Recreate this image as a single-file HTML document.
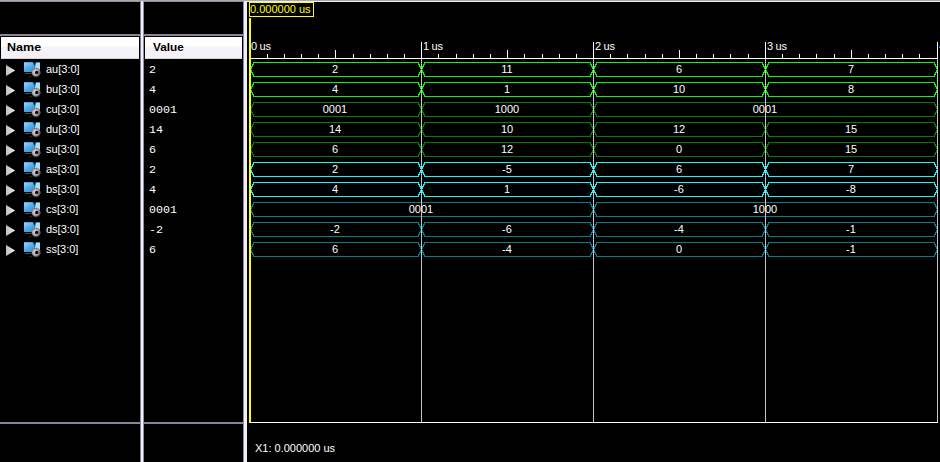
<!DOCTYPE html>
<html><head><meta charset="utf-8"><title>Waveform</title>
<style>
html,body{margin:0;padding:0;background:#000;}
body{width:940px;height:462px;position:relative;overflow:hidden;font-family:"Liberation Sans",sans-serif;font-size:11px;color:#fff;}
.abs{position:absolute;}
.hdr{position:absolute;top:37px;height:21px;background:linear-gradient(#fff 0,#fff 9px,#f5f3f8 10px,#f3f1f6 21px);border-bottom:1px solid #d3d8d3;color:#000;font-weight:bold;font-size:11px;line-height:21px;}
.nm{position:absolute;left:46px;font-size:11px;line-height:14px;white-space:nowrap;color:#fff;}
.val{position:absolute;left:149.4px;transform:scaleX(1.06);transform-origin:0 0;font-family:"Liberation Mono",monospace;font-size:11px;line-height:14px;white-space:nowrap;color:#fff;letter-spacing:0px;}
.wl{position:absolute;font-size:11px;line-height:14px;white-space:nowrap;color:#fff;text-align:center;width:60px;}
.rl{position:absolute;word-spacing:-0.7px;font-size:11px;line-height:14px;white-space:nowrap;color:#fff;top:39px;}
</style></head><body>

<div class="abs" style="left:0;top:0;width:940px;height:1px;background:#a3ad9f"></div>
<div class="abs" style="left:0;top:1px;width:243px;height:1px;background:#9a8cb0"></div>
<div class="abs" style="left:243px;top:1px;width:697px;height:1px;background:#f4e8f6"></div>
<div class="abs" style="left:0;top:34px;width:243px;height:2px;background:#8a8496"></div>
<div class="abs" style="left:0;top:422px;width:243px;height:2px;background:#8a8496"></div>
<div class="abs" style="left:140px;top:1px;width:4px;height:461px;background:#f0f2f0;border-left:1px solid #8080a0;border-right:1px solid #9090b0;box-sizing:border-box"></div>
<div class="abs" style="left:243px;top:1px;width:4px;height:461px;background:#f3edf4;border-left:1px solid #8888a8;box-sizing:border-box"></div>
<div class="hdr" style="left:1px;width:138px;"><span style="position:absolute;left:6px;display:inline-block;transform:scaleX(1.14);transform-origin:0 0">Name</span></div>
<div class="hdr" style="left:145px;width:97px;"><span style="position:absolute;left:8px;display:inline-block;transform:scaleX(1.07);transform-origin:0 0">Value</span></div>
<svg class="abs" style="left:5px;top:65px" width="11" height="12" viewBox="0 0 11 12"><defs><linearGradient id="t0" x1="0" x2="1"><stop offset="0" stop-color="#b8c2bc"/><stop offset="1" stop-color="#f0ecf0"/></linearGradient></defs><path d="M1 0 L10.2 5.5 L1 11 Z" fill="url(#t0)"/></svg>
<svg class="abs" style="left:24px;top:62px" width="17" height="16" viewBox="0 0 17 16">
<defs><linearGradient id="g0" x1="0" y1="0" x2="1" y2="1"><stop offset="0" stop-color="#9ddcf6"/><stop offset="0.5" stop-color="#4aa4e6"/><stop offset="1" stop-color="#3a8cd8"/></linearGradient>
<radialGradient id="r0" cx="0.4" cy="0.45" r="0.6"><stop offset="0" stop-color="#e4e0e4"/><stop offset="0.6" stop-color="#b4aeb6"/><stop offset="1" stop-color="#6e6a72"/></radialGradient></defs>
<rect x="0" y="0" width="16" height="10" fill="url(#g0)"/>
<rect x="0" y="0" width="16" height="1" fill="#2c7fd0" opacity="0.5"/>
<path d="M12 1 L16 1 L16 8 L11 6 Z" fill="#a4e2f4"/>
<path d="M8.6 0 L12.4 0 L10.6 3.6 Z" fill="#10283c"/>
<path d="M9.4 2 L11.6 2 L10.5 5.5 Z" fill="#1d4f7a" opacity="0.6"/>
<rect x="1" y="11" width="6" height="1" fill="#1c5a66"/>
<rect x="5" y="14" width="3" height="1" fill="#3a1a1a"/>
<circle cx="12" cy="10.5" r="4.3" fill="url(#r0)" stroke="#5a565e" stroke-width="1" stroke-dasharray="1.6 1.2" opacity="0.95"/>
<circle cx="12.7" cy="10.4" r="1.7" fill="#000"/>
</svg>
<div class="nm" style="top:62px">au[3:0]</div>
<div class="val" style="top:63px">2</div>
<svg class="abs" style="left:5px;top:85px" width="11" height="12" viewBox="0 0 11 12"><defs><linearGradient id="t1" x1="0" x2="1"><stop offset="0" stop-color="#b8c2bc"/><stop offset="1" stop-color="#f0ecf0"/></linearGradient></defs><path d="M1 0 L10.2 5.5 L1 11 Z" fill="url(#t1)"/></svg>
<svg class="abs" style="left:24px;top:82px" width="17" height="16" viewBox="0 0 17 16">
<defs><linearGradient id="g1" x1="0" y1="0" x2="1" y2="1"><stop offset="0" stop-color="#9ddcf6"/><stop offset="0.5" stop-color="#4aa4e6"/><stop offset="1" stop-color="#3a8cd8"/></linearGradient>
<radialGradient id="r1" cx="0.4" cy="0.45" r="0.6"><stop offset="0" stop-color="#e4e0e4"/><stop offset="0.6" stop-color="#b4aeb6"/><stop offset="1" stop-color="#6e6a72"/></radialGradient></defs>
<rect x="0" y="0" width="16" height="10" fill="url(#g1)"/>
<rect x="0" y="0" width="16" height="1" fill="#2c7fd0" opacity="0.5"/>
<path d="M12 1 L16 1 L16 8 L11 6 Z" fill="#a4e2f4"/>
<path d="M8.6 0 L12.4 0 L10.6 3.6 Z" fill="#10283c"/>
<path d="M9.4 2 L11.6 2 L10.5 5.5 Z" fill="#1d4f7a" opacity="0.6"/>
<rect x="1" y="11" width="6" height="1" fill="#1c5a66"/>
<rect x="5" y="14" width="3" height="1" fill="#3a1a1a"/>
<circle cx="12" cy="10.5" r="4.3" fill="url(#r1)" stroke="#5a565e" stroke-width="1" stroke-dasharray="1.6 1.2" opacity="0.95"/>
<circle cx="12.7" cy="10.4" r="1.7" fill="#000"/>
</svg>
<div class="nm" style="top:82px">bu[3:0]</div>
<div class="val" style="top:83px">4</div>
<svg class="abs" style="left:5px;top:105px" width="11" height="12" viewBox="0 0 11 12"><defs><linearGradient id="t2" x1="0" x2="1"><stop offset="0" stop-color="#b8c2bc"/><stop offset="1" stop-color="#f0ecf0"/></linearGradient></defs><path d="M1 0 L10.2 5.5 L1 11 Z" fill="url(#t2)"/></svg>
<svg class="abs" style="left:24px;top:102px" width="17" height="16" viewBox="0 0 17 16">
<defs><linearGradient id="g2" x1="0" y1="0" x2="1" y2="1"><stop offset="0" stop-color="#9ddcf6"/><stop offset="0.5" stop-color="#4aa4e6"/><stop offset="1" stop-color="#3a8cd8"/></linearGradient>
<radialGradient id="r2" cx="0.4" cy="0.45" r="0.6"><stop offset="0" stop-color="#e4e0e4"/><stop offset="0.6" stop-color="#b4aeb6"/><stop offset="1" stop-color="#6e6a72"/></radialGradient></defs>
<rect x="0" y="0" width="16" height="10" fill="url(#g2)"/>
<rect x="0" y="0" width="16" height="1" fill="#2c7fd0" opacity="0.5"/>
<path d="M12 1 L16 1 L16 8 L11 6 Z" fill="#a4e2f4"/>
<path d="M8.6 0 L12.4 0 L10.6 3.6 Z" fill="#10283c"/>
<path d="M9.4 2 L11.6 2 L10.5 5.5 Z" fill="#1d4f7a" opacity="0.6"/>
<rect x="1" y="11" width="6" height="1" fill="#1c5a66"/>
<rect x="5" y="14" width="3" height="1" fill="#3a1a1a"/>
<circle cx="12" cy="10.5" r="4.3" fill="url(#r2)" stroke="#5a565e" stroke-width="1" stroke-dasharray="1.6 1.2" opacity="0.95"/>
<circle cx="12.7" cy="10.4" r="1.7" fill="#000"/>
</svg>
<div class="nm" style="top:102px">cu[3:0]</div>
<div class="val" style="top:103px">0001</div>
<svg class="abs" style="left:5px;top:125px" width="11" height="12" viewBox="0 0 11 12"><defs><linearGradient id="t3" x1="0" x2="1"><stop offset="0" stop-color="#b8c2bc"/><stop offset="1" stop-color="#f0ecf0"/></linearGradient></defs><path d="M1 0 L10.2 5.5 L1 11 Z" fill="url(#t3)"/></svg>
<svg class="abs" style="left:24px;top:122px" width="17" height="16" viewBox="0 0 17 16">
<defs><linearGradient id="g3" x1="0" y1="0" x2="1" y2="1"><stop offset="0" stop-color="#9ddcf6"/><stop offset="0.5" stop-color="#4aa4e6"/><stop offset="1" stop-color="#3a8cd8"/></linearGradient>
<radialGradient id="r3" cx="0.4" cy="0.45" r="0.6"><stop offset="0" stop-color="#e4e0e4"/><stop offset="0.6" stop-color="#b4aeb6"/><stop offset="1" stop-color="#6e6a72"/></radialGradient></defs>
<rect x="0" y="0" width="16" height="10" fill="url(#g3)"/>
<rect x="0" y="0" width="16" height="1" fill="#2c7fd0" opacity="0.5"/>
<path d="M12 1 L16 1 L16 8 L11 6 Z" fill="#a4e2f4"/>
<path d="M8.6 0 L12.4 0 L10.6 3.6 Z" fill="#10283c"/>
<path d="M9.4 2 L11.6 2 L10.5 5.5 Z" fill="#1d4f7a" opacity="0.6"/>
<rect x="1" y="11" width="6" height="1" fill="#1c5a66"/>
<rect x="5" y="14" width="3" height="1" fill="#3a1a1a"/>
<circle cx="12" cy="10.5" r="4.3" fill="url(#r3)" stroke="#5a565e" stroke-width="1" stroke-dasharray="1.6 1.2" opacity="0.95"/>
<circle cx="12.7" cy="10.4" r="1.7" fill="#000"/>
</svg>
<div class="nm" style="top:122px">du[3:0]</div>
<div class="val" style="top:123px">14</div>
<svg class="abs" style="left:5px;top:145px" width="11" height="12" viewBox="0 0 11 12"><defs><linearGradient id="t4" x1="0" x2="1"><stop offset="0" stop-color="#b8c2bc"/><stop offset="1" stop-color="#f0ecf0"/></linearGradient></defs><path d="M1 0 L10.2 5.5 L1 11 Z" fill="url(#t4)"/></svg>
<svg class="abs" style="left:24px;top:142px" width="17" height="16" viewBox="0 0 17 16">
<defs><linearGradient id="g4" x1="0" y1="0" x2="1" y2="1"><stop offset="0" stop-color="#9ddcf6"/><stop offset="0.5" stop-color="#4aa4e6"/><stop offset="1" stop-color="#3a8cd8"/></linearGradient>
<radialGradient id="r4" cx="0.4" cy="0.45" r="0.6"><stop offset="0" stop-color="#e4e0e4"/><stop offset="0.6" stop-color="#b4aeb6"/><stop offset="1" stop-color="#6e6a72"/></radialGradient></defs>
<rect x="0" y="0" width="16" height="10" fill="url(#g4)"/>
<rect x="0" y="0" width="16" height="1" fill="#2c7fd0" opacity="0.5"/>
<path d="M12 1 L16 1 L16 8 L11 6 Z" fill="#a4e2f4"/>
<path d="M8.6 0 L12.4 0 L10.6 3.6 Z" fill="#10283c"/>
<path d="M9.4 2 L11.6 2 L10.5 5.5 Z" fill="#1d4f7a" opacity="0.6"/>
<rect x="1" y="11" width="6" height="1" fill="#1c5a66"/>
<rect x="5" y="14" width="3" height="1" fill="#3a1a1a"/>
<circle cx="12" cy="10.5" r="4.3" fill="url(#r4)" stroke="#5a565e" stroke-width="1" stroke-dasharray="1.6 1.2" opacity="0.95"/>
<circle cx="12.7" cy="10.4" r="1.7" fill="#000"/>
</svg>
<div class="nm" style="top:142px">su[3:0]</div>
<div class="val" style="top:143px">6</div>
<svg class="abs" style="left:5px;top:165px" width="11" height="12" viewBox="0 0 11 12"><defs><linearGradient id="t5" x1="0" x2="1"><stop offset="0" stop-color="#b8c2bc"/><stop offset="1" stop-color="#f0ecf0"/></linearGradient></defs><path d="M1 0 L10.2 5.5 L1 11 Z" fill="url(#t5)"/></svg>
<svg class="abs" style="left:24px;top:162px" width="17" height="16" viewBox="0 0 17 16">
<defs><linearGradient id="g5" x1="0" y1="0" x2="1" y2="1"><stop offset="0" stop-color="#9ddcf6"/><stop offset="0.5" stop-color="#4aa4e6"/><stop offset="1" stop-color="#3a8cd8"/></linearGradient>
<radialGradient id="r5" cx="0.4" cy="0.45" r="0.6"><stop offset="0" stop-color="#e4e0e4"/><stop offset="0.6" stop-color="#b4aeb6"/><stop offset="1" stop-color="#6e6a72"/></radialGradient></defs>
<rect x="0" y="0" width="16" height="10" fill="url(#g5)"/>
<rect x="0" y="0" width="16" height="1" fill="#2c7fd0" opacity="0.5"/>
<path d="M12 1 L16 1 L16 8 L11 6 Z" fill="#a4e2f4"/>
<path d="M8.6 0 L12.4 0 L10.6 3.6 Z" fill="#10283c"/>
<path d="M9.4 2 L11.6 2 L10.5 5.5 Z" fill="#1d4f7a" opacity="0.6"/>
<rect x="1" y="11" width="6" height="1" fill="#1c5a66"/>
<rect x="5" y="14" width="3" height="1" fill="#3a1a1a"/>
<circle cx="12" cy="10.5" r="4.3" fill="url(#r5)" stroke="#5a565e" stroke-width="1" stroke-dasharray="1.6 1.2" opacity="0.95"/>
<circle cx="12.7" cy="10.4" r="1.7" fill="#000"/>
</svg>
<div class="nm" style="top:162px">as[3:0]</div>
<div class="val" style="top:163px">2</div>
<svg class="abs" style="left:5px;top:185px" width="11" height="12" viewBox="0 0 11 12"><defs><linearGradient id="t6" x1="0" x2="1"><stop offset="0" stop-color="#b8c2bc"/><stop offset="1" stop-color="#f0ecf0"/></linearGradient></defs><path d="M1 0 L10.2 5.5 L1 11 Z" fill="url(#t6)"/></svg>
<svg class="abs" style="left:24px;top:182px" width="17" height="16" viewBox="0 0 17 16">
<defs><linearGradient id="g6" x1="0" y1="0" x2="1" y2="1"><stop offset="0" stop-color="#9ddcf6"/><stop offset="0.5" stop-color="#4aa4e6"/><stop offset="1" stop-color="#3a8cd8"/></linearGradient>
<radialGradient id="r6" cx="0.4" cy="0.45" r="0.6"><stop offset="0" stop-color="#e4e0e4"/><stop offset="0.6" stop-color="#b4aeb6"/><stop offset="1" stop-color="#6e6a72"/></radialGradient></defs>
<rect x="0" y="0" width="16" height="10" fill="url(#g6)"/>
<rect x="0" y="0" width="16" height="1" fill="#2c7fd0" opacity="0.5"/>
<path d="M12 1 L16 1 L16 8 L11 6 Z" fill="#a4e2f4"/>
<path d="M8.6 0 L12.4 0 L10.6 3.6 Z" fill="#10283c"/>
<path d="M9.4 2 L11.6 2 L10.5 5.5 Z" fill="#1d4f7a" opacity="0.6"/>
<rect x="1" y="11" width="6" height="1" fill="#1c5a66"/>
<rect x="5" y="14" width="3" height="1" fill="#3a1a1a"/>
<circle cx="12" cy="10.5" r="4.3" fill="url(#r6)" stroke="#5a565e" stroke-width="1" stroke-dasharray="1.6 1.2" opacity="0.95"/>
<circle cx="12.7" cy="10.4" r="1.7" fill="#000"/>
</svg>
<div class="nm" style="top:182px">bs[3:0]</div>
<div class="val" style="top:183px">4</div>
<svg class="abs" style="left:5px;top:205px" width="11" height="12" viewBox="0 0 11 12"><defs><linearGradient id="t7" x1="0" x2="1"><stop offset="0" stop-color="#b8c2bc"/><stop offset="1" stop-color="#f0ecf0"/></linearGradient></defs><path d="M1 0 L10.2 5.5 L1 11 Z" fill="url(#t7)"/></svg>
<svg class="abs" style="left:24px;top:202px" width="17" height="16" viewBox="0 0 17 16">
<defs><linearGradient id="g7" x1="0" y1="0" x2="1" y2="1"><stop offset="0" stop-color="#9ddcf6"/><stop offset="0.5" stop-color="#4aa4e6"/><stop offset="1" stop-color="#3a8cd8"/></linearGradient>
<radialGradient id="r7" cx="0.4" cy="0.45" r="0.6"><stop offset="0" stop-color="#e4e0e4"/><stop offset="0.6" stop-color="#b4aeb6"/><stop offset="1" stop-color="#6e6a72"/></radialGradient></defs>
<rect x="0" y="0" width="16" height="10" fill="url(#g7)"/>
<rect x="0" y="0" width="16" height="1" fill="#2c7fd0" opacity="0.5"/>
<path d="M12 1 L16 1 L16 8 L11 6 Z" fill="#a4e2f4"/>
<path d="M8.6 0 L12.4 0 L10.6 3.6 Z" fill="#10283c"/>
<path d="M9.4 2 L11.6 2 L10.5 5.5 Z" fill="#1d4f7a" opacity="0.6"/>
<rect x="1" y="11" width="6" height="1" fill="#1c5a66"/>
<rect x="5" y="14" width="3" height="1" fill="#3a1a1a"/>
<circle cx="12" cy="10.5" r="4.3" fill="url(#r7)" stroke="#5a565e" stroke-width="1" stroke-dasharray="1.6 1.2" opacity="0.95"/>
<circle cx="12.7" cy="10.4" r="1.7" fill="#000"/>
</svg>
<div class="nm" style="top:202px">cs[3:0]</div>
<div class="val" style="top:203px">0001</div>
<svg class="abs" style="left:5px;top:225px" width="11" height="12" viewBox="0 0 11 12"><defs><linearGradient id="t8" x1="0" x2="1"><stop offset="0" stop-color="#b8c2bc"/><stop offset="1" stop-color="#f0ecf0"/></linearGradient></defs><path d="M1 0 L10.2 5.5 L1 11 Z" fill="url(#t8)"/></svg>
<svg class="abs" style="left:24px;top:222px" width="17" height="16" viewBox="0 0 17 16">
<defs><linearGradient id="g8" x1="0" y1="0" x2="1" y2="1"><stop offset="0" stop-color="#9ddcf6"/><stop offset="0.5" stop-color="#4aa4e6"/><stop offset="1" stop-color="#3a8cd8"/></linearGradient>
<radialGradient id="r8" cx="0.4" cy="0.45" r="0.6"><stop offset="0" stop-color="#e4e0e4"/><stop offset="0.6" stop-color="#b4aeb6"/><stop offset="1" stop-color="#6e6a72"/></radialGradient></defs>
<rect x="0" y="0" width="16" height="10" fill="url(#g8)"/>
<rect x="0" y="0" width="16" height="1" fill="#2c7fd0" opacity="0.5"/>
<path d="M12 1 L16 1 L16 8 L11 6 Z" fill="#a4e2f4"/>
<path d="M8.6 0 L12.4 0 L10.6 3.6 Z" fill="#10283c"/>
<path d="M9.4 2 L11.6 2 L10.5 5.5 Z" fill="#1d4f7a" opacity="0.6"/>
<rect x="1" y="11" width="6" height="1" fill="#1c5a66"/>
<rect x="5" y="14" width="3" height="1" fill="#3a1a1a"/>
<circle cx="12" cy="10.5" r="4.3" fill="url(#r8)" stroke="#5a565e" stroke-width="1" stroke-dasharray="1.6 1.2" opacity="0.95"/>
<circle cx="12.7" cy="10.4" r="1.7" fill="#000"/>
</svg>
<div class="nm" style="top:222px">ds[3:0]</div>
<div class="val" style="top:223px">-2</div>
<svg class="abs" style="left:5px;top:245px" width="11" height="12" viewBox="0 0 11 12"><defs><linearGradient id="t9" x1="0" x2="1"><stop offset="0" stop-color="#b8c2bc"/><stop offset="1" stop-color="#f0ecf0"/></linearGradient></defs><path d="M1 0 L10.2 5.5 L1 11 Z" fill="url(#t9)"/></svg>
<svg class="abs" style="left:24px;top:242px" width="17" height="16" viewBox="0 0 17 16">
<defs><linearGradient id="g9" x1="0" y1="0" x2="1" y2="1"><stop offset="0" stop-color="#9ddcf6"/><stop offset="0.5" stop-color="#4aa4e6"/><stop offset="1" stop-color="#3a8cd8"/></linearGradient>
<radialGradient id="r9" cx="0.4" cy="0.45" r="0.6"><stop offset="0" stop-color="#e4e0e4"/><stop offset="0.6" stop-color="#b4aeb6"/><stop offset="1" stop-color="#6e6a72"/></radialGradient></defs>
<rect x="0" y="0" width="16" height="10" fill="url(#g9)"/>
<rect x="0" y="0" width="16" height="1" fill="#2c7fd0" opacity="0.5"/>
<path d="M12 1 L16 1 L16 8 L11 6 Z" fill="#a4e2f4"/>
<path d="M8.6 0 L12.4 0 L10.6 3.6 Z" fill="#10283c"/>
<path d="M9.4 2 L11.6 2 L10.5 5.5 Z" fill="#1d4f7a" opacity="0.6"/>
<rect x="1" y="11" width="6" height="1" fill="#1c5a66"/>
<rect x="5" y="14" width="3" height="1" fill="#3a1a1a"/>
<circle cx="12" cy="10.5" r="4.3" fill="url(#r9)" stroke="#5a565e" stroke-width="1" stroke-dasharray="1.6 1.2" opacity="0.95"/>
<circle cx="12.7" cy="10.4" r="1.7" fill="#000"/>
</svg>
<div class="nm" style="top:242px">ss[3:0]</div>
<div class="val" style="top:243px">6</div>
<svg class="abs" style="left:0;top:0" width="940" height="462" viewBox="0 0 940 462" shape-rendering="crispEdges"><defs><pattern id="dith" x="0" y="0" width="1" height="2" patternUnits="userSpaceOnUse"><rect x="0" y="0" width="1" height="1" fill="#d2dad2"/><rect x="0" y="1" width="1" height="1" fill="#c8a2d0"/></pattern></defs>
<rect x="251" y="58" width="687" height="1" fill="#fff"/>
<rect x="267" y="54" width="1" height="4" fill="#fff"/>
<rect x="284" y="54" width="1" height="4" fill="#fff"/>
<rect x="301" y="54" width="1" height="4" fill="#fff"/>
<rect x="318" y="54" width="1" height="4" fill="#fff"/>
<rect x="335" y="50" width="1" height="8" fill="#fff"/>
<rect x="353" y="54" width="1" height="4" fill="#fff"/>
<rect x="370" y="54" width="1" height="4" fill="#fff"/>
<rect x="387" y="54" width="1" height="4" fill="#fff"/>
<rect x="404" y="54" width="1" height="4" fill="#fff"/>
<rect x="438" y="54" width="1" height="4" fill="#fff"/>
<rect x="456" y="54" width="1" height="4" fill="#fff"/>
<rect x="473" y="54" width="1" height="4" fill="#fff"/>
<rect x="490" y="54" width="1" height="4" fill="#fff"/>
<rect x="507" y="50" width="1" height="8" fill="#fff"/>
<rect x="524" y="54" width="1" height="4" fill="#fff"/>
<rect x="542" y="54" width="1" height="4" fill="#fff"/>
<rect x="559" y="54" width="1" height="4" fill="#fff"/>
<rect x="576" y="54" width="1" height="4" fill="#fff"/>
<rect x="610" y="54" width="1" height="4" fill="#fff"/>
<rect x="627" y="54" width="1" height="4" fill="#fff"/>
<rect x="645" y="54" width="1" height="4" fill="#fff"/>
<rect x="662" y="54" width="1" height="4" fill="#fff"/>
<rect x="679" y="50" width="1" height="8" fill="#fff"/>
<rect x="696" y="54" width="1" height="4" fill="#fff"/>
<rect x="713" y="54" width="1" height="4" fill="#fff"/>
<rect x="730" y="54" width="1" height="4" fill="#fff"/>
<rect x="748" y="54" width="1" height="4" fill="#fff"/>
<rect x="782" y="54" width="1" height="4" fill="#fff"/>
<rect x="799" y="54" width="1" height="4" fill="#fff"/>
<rect x="816" y="54" width="1" height="4" fill="#fff"/>
<rect x="834" y="54" width="1" height="4" fill="#fff"/>
<rect x="851" y="50" width="1" height="8" fill="#fff"/>
<rect x="868" y="54" width="1" height="4" fill="#fff"/>
<rect x="885" y="54" width="1" height="4" fill="#fff"/>
<rect x="902" y="54" width="1" height="4" fill="#fff"/>
<rect x="919" y="54" width="1" height="4" fill="#fff"/>
<rect x="249" y="422" width="689" height="1" fill="#fff"/>
<path d="M250.5 69.5 L254.0 62.5 L418.0 62.5 L421.5 69.5 M250.5 69.5 L254.0 76.5 L418.0 76.5 L421.5 69.5 M421.5 69.5 L425.0 62.5 L590.0 62.5 L593.5 69.5 M421.5 69.5 L425.0 76.5 L590.0 76.5 L593.5 69.5 M593.5 69.5 L597.0 62.5 L762.0 62.5 L765.5 69.5 M593.5 69.5 L597.0 76.5 L762.0 76.5 L765.5 69.5 M765.5 69.5 L769.0 62.5 L934.0 62.5 L937.5 69.5 M765.5 69.5 L769.0 76.5 L934.0 76.5 L937.5 69.5" fill="none" stroke="#00fb00" stroke-width="1" stroke-linejoin="bevel"/>
<path d="M250.5 89.5 L254.0 82.5 L418.0 82.5 L421.5 89.5 M250.5 89.5 L254.0 96.5 L418.0 96.5 L421.5 89.5 M421.5 89.5 L425.0 82.5 L590.0 82.5 L593.5 89.5 M421.5 89.5 L425.0 96.5 L590.0 96.5 L593.5 89.5 M593.5 89.5 L597.0 82.5 L762.0 82.5 L765.5 89.5 M593.5 89.5 L597.0 96.5 L762.0 96.5 L765.5 89.5 M765.5 89.5 L769.0 82.5 L934.0 82.5 L937.5 89.5 M765.5 89.5 L769.0 96.5 L934.0 96.5 L937.5 89.5" fill="none" stroke="#00fb00" stroke-width="1" stroke-linejoin="bevel"/>
<path d="M250.5 109.5 L254.0 102.5 L418.0 102.5 L421.5 109.5 M250.5 109.5 L254.0 116.5 L418.0 116.5 L421.5 109.5 M421.5 109.5 L425.0 102.5 L590.0 102.5 L593.5 109.5 M421.5 109.5 L425.0 116.5 L590.0 116.5 L593.5 109.5 M593.5 109.5 L597.0 102.5 L934.0 102.5 L937.5 109.5 M593.5 109.5 L597.0 116.5 L934.0 116.5 L937.5 109.5" fill="none" stroke="#008000" stroke-width="1" stroke-linejoin="bevel"/>
<path d="M250.5 129.5 L254.0 122.5 L418.0 122.5 L421.5 129.5 M250.5 129.5 L254.0 136.5 L418.0 136.5 L421.5 129.5 M421.5 129.5 L425.0 122.5 L590.0 122.5 L593.5 129.5 M421.5 129.5 L425.0 136.5 L590.0 136.5 L593.5 129.5 M593.5 129.5 L597.0 122.5 L762.0 122.5 L765.5 129.5 M593.5 129.5 L597.0 136.5 L762.0 136.5 L765.5 129.5 M765.5 129.5 L769.0 122.5 L934.0 122.5 L937.5 129.5 M765.5 129.5 L769.0 136.5 L934.0 136.5 L937.5 129.5" fill="none" stroke="#008000" stroke-width="1" stroke-linejoin="bevel"/>
<path d="M250.5 149.5 L254.0 142.5 L418.0 142.5 L421.5 149.5 M250.5 149.5 L254.0 156.5 L418.0 156.5 L421.5 149.5 M421.5 149.5 L425.0 142.5 L590.0 142.5 L593.5 149.5 M421.5 149.5 L425.0 156.5 L590.0 156.5 L593.5 149.5 M593.5 149.5 L597.0 142.5 L762.0 142.5 L765.5 149.5 M593.5 149.5 L597.0 156.5 L762.0 156.5 L765.5 149.5 M765.5 149.5 L769.0 142.5 L934.0 142.5 L937.5 149.5 M765.5 149.5 L769.0 156.5 L934.0 156.5 L937.5 149.5" fill="none" stroke="#008000" stroke-width="1" stroke-linejoin="bevel"/>
<path d="M250.5 169.5 L254.0 162.5 L418.0 162.5 L421.5 169.5 M250.5 169.5 L254.0 176.5 L418.0 176.5 L421.5 169.5 M421.5 169.5 L425.0 162.5 L590.0 162.5 L593.5 169.5 M421.5 169.5 L425.0 176.5 L590.0 176.5 L593.5 169.5 M593.5 169.5 L597.0 162.5 L762.0 162.5 L765.5 169.5 M593.5 169.5 L597.0 176.5 L762.0 176.5 L765.5 169.5 M765.5 169.5 L769.0 162.5 L934.0 162.5 L937.5 169.5 M765.5 169.5 L769.0 176.5 L934.0 176.5 L937.5 169.5" fill="none" stroke="#00fcfc" stroke-width="1" stroke-linejoin="bevel"/>
<path d="M250.5 189.5 L254.0 182.5 L418.0 182.5 L421.5 189.5 M250.5 189.5 L254.0 196.5 L418.0 196.5 L421.5 189.5 M421.5 189.5 L425.0 182.5 L590.0 182.5 L593.5 189.5 M421.5 189.5 L425.0 196.5 L590.0 196.5 L593.5 189.5 M593.5 189.5 L597.0 182.5 L762.0 182.5 L765.5 189.5 M593.5 189.5 L597.0 196.5 L762.0 196.5 L765.5 189.5 M765.5 189.5 L769.0 182.5 L934.0 182.5 L937.5 189.5 M765.5 189.5 L769.0 196.5 L934.0 196.5 L937.5 189.5" fill="none" stroke="#00fcfc" stroke-width="1" stroke-linejoin="bevel"/>
<path d="M250.5 209.5 L254.0 202.5 L590.0 202.5 L593.5 209.5 M250.5 209.5 L254.0 216.5 L590.0 216.5 L593.5 209.5 M593.5 209.5 L597.0 202.5 L934.0 202.5 L937.5 209.5 M593.5 209.5 L597.0 216.5 L934.0 216.5 L937.5 209.5" fill="none" stroke="#008088" stroke-width="1" stroke-linejoin="bevel"/>
<path d="M250.5 229.5 L254.0 222.5 L418.0 222.5 L421.5 229.5 M250.5 229.5 L254.0 236.5 L418.0 236.5 L421.5 229.5 M421.5 229.5 L425.0 222.5 L590.0 222.5 L593.5 229.5 M421.5 229.5 L425.0 236.5 L590.0 236.5 L593.5 229.5 M593.5 229.5 L597.0 222.5 L762.0 222.5 L765.5 229.5 M593.5 229.5 L597.0 236.5 L762.0 236.5 L765.5 229.5 M765.5 229.5 L769.0 222.5 L934.0 222.5 L937.5 229.5 M765.5 229.5 L769.0 236.5 L934.0 236.5 L937.5 229.5" fill="none" stroke="#008088" stroke-width="1" stroke-linejoin="bevel"/>
<path d="M250.5 249.5 L254.0 242.5 L418.0 242.5 L421.5 249.5 M250.5 249.5 L254.0 256.5 L418.0 256.5 L421.5 249.5 M421.5 249.5 L425.0 242.5 L590.0 242.5 L593.5 249.5 M421.5 249.5 L425.0 256.5 L590.0 256.5 L593.5 249.5 M593.5 249.5 L597.0 242.5 L762.0 242.5 L765.5 249.5 M593.5 249.5 L597.0 256.5 L762.0 256.5 L765.5 249.5 M765.5 249.5 L769.0 242.5 L934.0 242.5 L937.5 249.5 M765.5 249.5 L769.0 256.5 L934.0 256.5 L937.5 249.5" fill="none" stroke="#008088" stroke-width="1" stroke-linejoin="bevel"/>
<rect x="421" y="59" width="1" height="363" fill="url(#dith)"/>
<rect x="421" y="42" width="1" height="17" fill="#fff"/>
<rect x="593" y="59" width="1" height="363" fill="url(#dith)"/>
<rect x="593" y="42" width="1" height="17" fill="#fff"/>
<rect x="765" y="59" width="1" height="363" fill="url(#dith)"/>
<rect x="765" y="42" width="1" height="17" fill="#fff"/>
<rect x="937" y="59" width="1" height="363" fill="url(#dith)"/>
<rect x="937" y="42" width="1" height="17" fill="#fff"/>
<rect x="249" y="18" width="2" height="405" fill="#ffff00"/>
<rect x="249.5" y="2.5" width="64" height="14" fill="#000" stroke="#ffff00" stroke-width="1"/>
</svg>
<div class="wl" style="left:305.0px;top:62px">2</div>
<div class="wl" style="left:477.0px;top:62px">11</div>
<div class="wl" style="left:649.0px;top:62px">6</div>
<div class="wl" style="left:821.0px;top:62px">7</div>
<div class="wl" style="left:305.0px;top:82px">4</div>
<div class="wl" style="left:477.0px;top:82px">1</div>
<div class="wl" style="left:649.0px;top:82px">10</div>
<div class="wl" style="left:821.0px;top:82px">8</div>
<div class="wl" style="left:305.0px;top:102px">0001</div>
<div class="wl" style="left:477.0px;top:102px">1000</div>
<div class="wl" style="left:735.0px;top:102px">0001</div>
<div class="wl" style="left:305.0px;top:122px">14</div>
<div class="wl" style="left:477.0px;top:122px">10</div>
<div class="wl" style="left:649.0px;top:122px">12</div>
<div class="wl" style="left:821.0px;top:122px">15</div>
<div class="wl" style="left:305.0px;top:142px">6</div>
<div class="wl" style="left:477.0px;top:142px">12</div>
<div class="wl" style="left:649.0px;top:142px">0</div>
<div class="wl" style="left:821.0px;top:142px">15</div>
<div class="wl" style="left:305.0px;top:162px">2</div>
<div class="wl" style="left:477.0px;top:162px">-5</div>
<div class="wl" style="left:649.0px;top:162px">6</div>
<div class="wl" style="left:821.0px;top:162px">7</div>
<div class="wl" style="left:305.0px;top:182px">4</div>
<div class="wl" style="left:477.0px;top:182px">1</div>
<div class="wl" style="left:649.0px;top:182px">-6</div>
<div class="wl" style="left:821.0px;top:182px">-8</div>
<div class="wl" style="left:391.0px;top:202px">0001</div>
<div class="wl" style="left:735.0px;top:202px">1000</div>
<div class="wl" style="left:305.0px;top:222px">-2</div>
<div class="wl" style="left:477.0px;top:222px">-6</div>
<div class="wl" style="left:649.0px;top:222px">-4</div>
<div class="wl" style="left:821.0px;top:222px">-1</div>
<div class="wl" style="left:305.0px;top:242px">6</div>
<div class="wl" style="left:477.0px;top:242px">-4</div>
<div class="wl" style="left:649.0px;top:242px">0</div>
<div class="wl" style="left:821.0px;top:242px">-1</div>
<div class="rl" style="left:251px">0 us</div>
<div class="rl" style="left:423px">1 us</div>
<div class="rl" style="left:595px">2 us</div>
<div class="rl" style="left:767px">3 us</div>
<div class="rl" style="left:939px;color:#6aa0ff">4 us</div>
<div class="abs" style="left:250px;top:2px;font-size:11px;line-height:14px;color:#ffff00;white-space:nowrap">0.000000 us</div>
<div class="abs" style="left:255px;top:441px;font-size:11px;line-height:14px;color:#fff;white-space:nowrap">X1: 0.000000 us</div>
</body></html>
